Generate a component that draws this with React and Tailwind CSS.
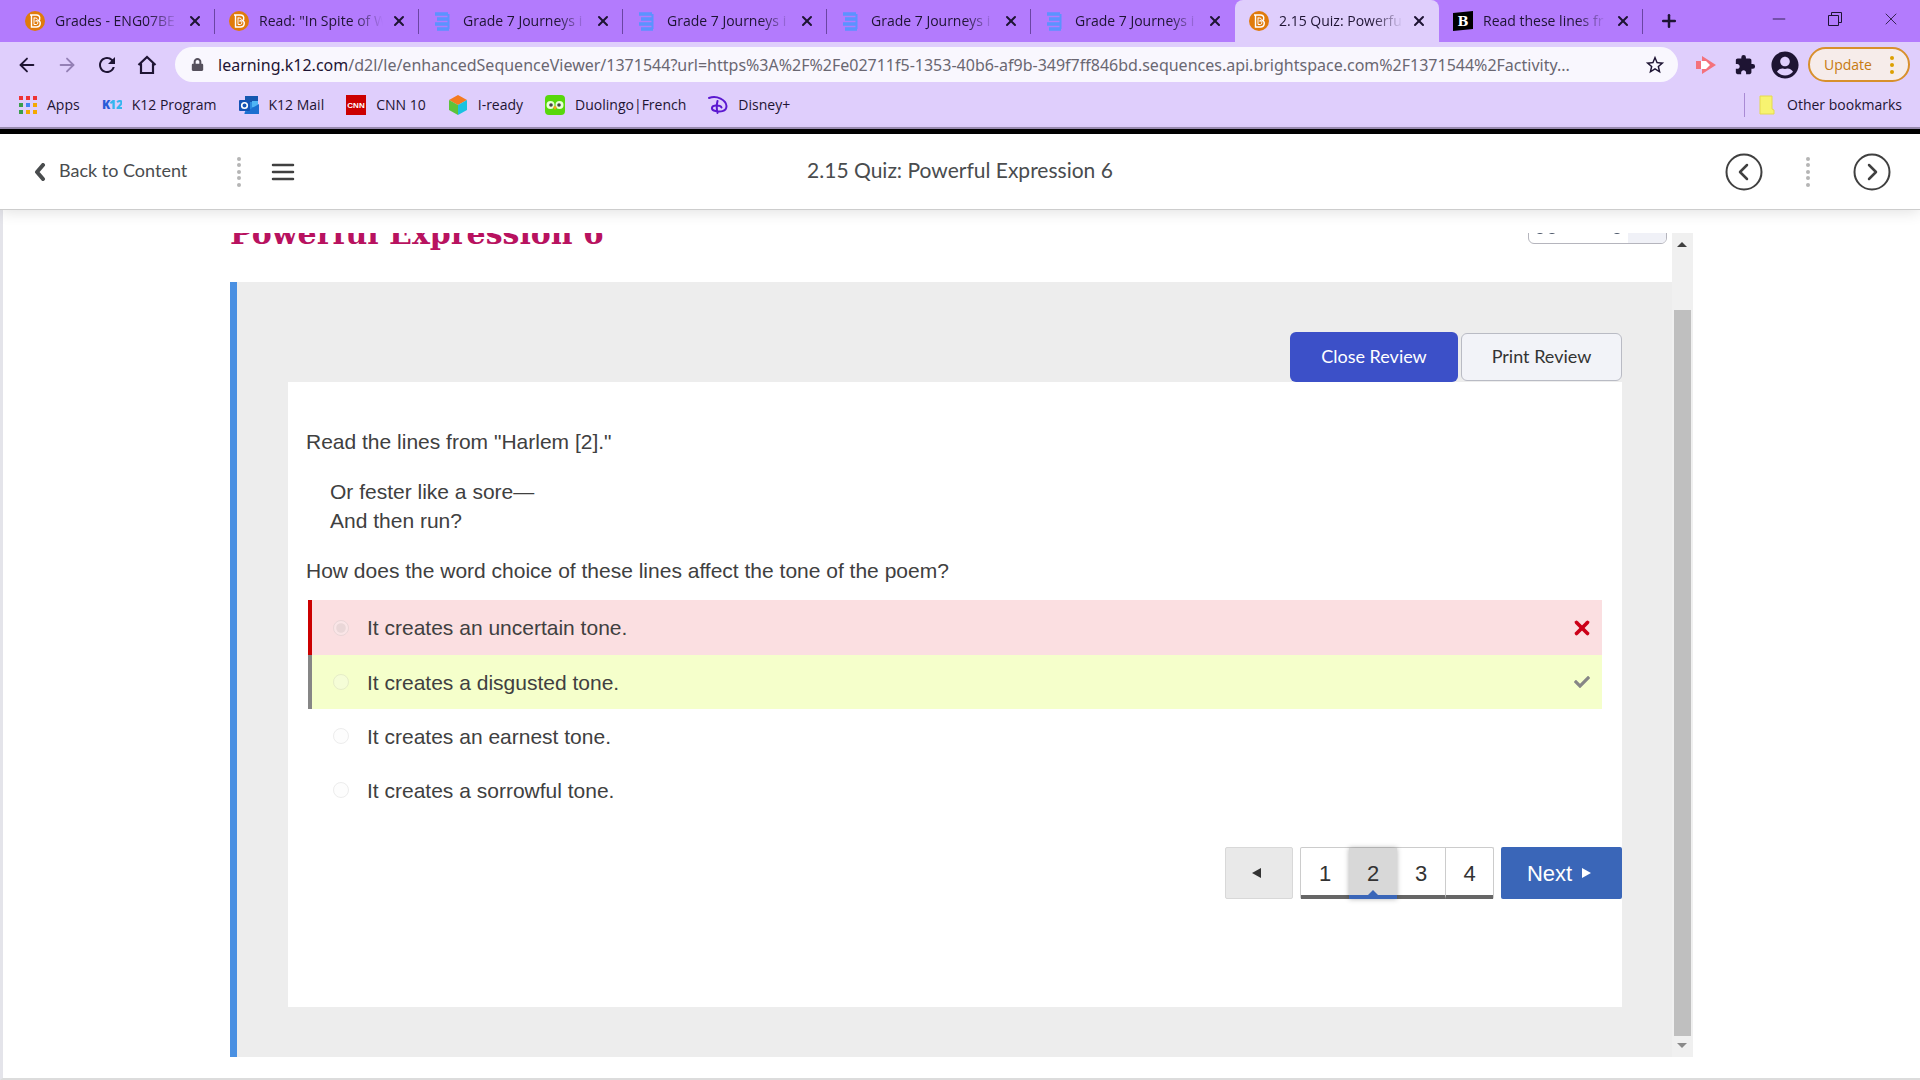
import { ArrowLeft, ArrowRight, Minus, Plus, X } from "lucide-react";
import { FaCheck, FaLock, FaUserCircle } from "react-icons/fa";
import { MdExtension, MdRefresh, MdStarBorder } from "react-icons/md";

const tabs = [
  { title: 'Grades - ENG07BE', icon: 'brightspace' },
  { title: 'Read: "In Spite of W', icon: 'brightspace' },
  { title: 'Grade 7 Journeys i', icon: 'docs' },
  { title: 'Grade 7 Journeys i', icon: 'docs' },
  { title: 'Grade 7 Journeys i', icon: 'docs' },
  { title: 'Grade 7 Journeys i', icon: 'docs' },
  { title: '2.15 Quiz: Powerfu', icon: 'brightspace', active: true },
  { title: 'Read these lines fr', icon: 'brainly' },
]

const bookmarks = [
  { name: 'Apps', icon: 'apps' },
  { name: 'K12 Program', icon: 'k12' },
  { name: 'K12 Mail', icon: 'outlook' },
  { name: 'CNN 10', icon: 'cnn' },
  { name: 'I-ready', icon: 'iready' },
  { name: 'Duolingo|French', icon: 'duolingo' },
  { name: 'Disney+', icon: 'disney' },
]

const answers = [
  { text: 'It creates an uncertain tone.', state: 'wrong' },
  { text: 'It creates a disgusted tone.', state: 'right' },
  { text: 'It creates an earnest tone.' },
  { text: 'It creates a sorrowful tone.' },
]

const rowStyles = {
  wrong: 'h-[55px] border-[#cc0000] bg-[#fbdfe1]',
  right: 'h-[54px] border-[#868686] bg-[#f5ffcb]',
  none: 'h-[54px] border-transparent',
}

const Icon = ({ name }) => {
  switch (name) {
    case 'brightspace':
      return (
        <svg viewBox="0 0 20 20" className="size-5 shrink-0" fill="none">
          <circle cx="10" cy="10" r="10" fill="#e07b0c" />
          <path d="M5 4h6.500c4 0 4 4.500 2 5.700 3 1.300 2 6.300-2 6.300H6.500V4" stroke="#fff" strokeWidth="1.400" />
          <path d="M9 6.500v7h2.500c1.800 0 1.800-3.500 0-3.500H10.500h.5c1.800 0 1.800-3 0-3H9" stroke="#fff" />
        </svg>
      )
    case 'docs':
      return (
        <svg viewBox="0 0 20 20" className="size-5 shrink-0" fill="none" stroke="#5b93ff" strokeWidth="3.500">
          <path d="M2 3h13M4 8h12M2 13h13M4 18h12" />
          <path d="M15.500 3v15" strokeWidth="2" />
        </svg>
      )
    case 'brainly':
      return (
        <svg viewBox="0 0 20 20" className="size-5 shrink-0">
          <path d="M0 2 20 0v18L0 20z" fill="#000" />
          <text x="10" y="15" textAnchor="middle" fontSize="13" fontWeight="bold" fill="#fff" fontFamily="DejaVu Serif">B</text>
        </svg>
      )
    case 'apps':
      return (
        <svg viewBox="0 0 18 18" className="size-[18px] shrink-0">
          {['#e33', '#e33', '#e33', '#3b9e4b', '#4285f4', '#f4a800', '#3b9e4b', '#f4a800', '#f4a800'].map((color, i) => (
            <rect key={i} x={(i % 3) * 7} y={Math.floor(i / 3) * 7} width="4" height="4" fill={color} />
          ))}
        </svg>
      )
    case 'k12':
      return (
        <svg viewBox="0 0 20 20" className="size-5 shrink-0" fontFamily="Open Sans" fontSize="12" fontWeight="800">
          <text x="0" y="14" fill="#2a5bd7">K</text>
          <text x="7" y="14" fill="#35b6ee">12</text>
        </svg>
      )
    case 'outlook':
      return (
        <svg viewBox="0 0 20 20" className="size-5 shrink-0">
          <path d="M6 1h13v17H6z" fill="#2b8ae0" />
          <path d="M6 1h13v6H6z" fill="#1557b0" />
          <path d="M13 6h6v6h-6z" fill="#50b5f5" />
          <path d="M5 18 20 9v10H6z" fill="#1c6fd0" />
          <rect y="5" width="11" height="11" rx="1" fill="#1353b5" />
          <circle cx="5.500" cy="10.500" r="2.800" fill="none" stroke="#fff" strokeWidth="1.600" />
        </svg>
      )
    case 'cnn':
      return (
        <svg viewBox="0 0 20 20" className="size-5 shrink-0">
          <rect width="20" height="20" fill="#c00" />
          <text x="10" y="13" textAnchor="middle" fontSize="8" fontWeight="bold" fill="#fff" fontFamily="Liberation Sans">CNN</text>
        </svg>
      )
    case 'iready':
      return (
        <svg viewBox="0 0 20 20" className="size-5 shrink-0">
          <path d="m10 0 9 5-9 5-9-5z" fill="#f47a20" />
          <path d="m1 5 9 5v10l-9-5z" fill="#5dc33a" />
          <path d="m19 5-9 5v10l9-5z" fill="#19c2e0" />
        </svg>
      )
    case 'duolingo':
      return (
        <svg viewBox="0 0 20 20" className="size-5 shrink-0">
          <rect width="20" height="20" rx="4" fill="#58d80a" />
          <circle cx="5.500" cy="10" r="4" fill="#e9ffd8" />
          <circle cx="14.500" cy="10" r="4" fill="#e9ffd8" />
          <circle cx="6" cy="10" r="1.800" fill="#444" />
          <circle cx="14" cy="10" r="1.800" fill="#444" />
          <path d="m8 12 2-1 2 1-2 3z" fill="#f9a01b" />
        </svg>
      )
    case 'disney':
      return (
        <svg viewBox="0 0 20 20" className="size-5 shrink-0" fill="none" stroke="#5b18d0" strokeWidth="2" strokeLinecap="round">
          <path d="M1 3C9 0 18 5 18.500 11c0 6-7 6-11 5-5-1-4.500-5 0-5.500 3-.3 5.500.5 6 2M9.500 6c-1 4-1 8 0 12" />
        </svg>
      )
    default:
      return null
  }
}

const Tab = ({ title, icon, active }) => (
  <div className={`flex h-full w-[204px] items-center pl-[14px] pr-3 ${active ? 'rounded-t-lg bg-[#dfcefc]' : ''}`}>
    <Icon name={icon} />
    <span className="ml-[10px] min-w-0 flex-1 overflow-hidden whitespace-nowrap [mask-image:linear-gradient(to_right,black_75%,transparent)]">
      {title}
    </span>
    <button aria-label="Close tab" className="ml-2"><X className="size-4" strokeWidth={3} /></button>
  </div>
)

const BrowserChrome = () => (
  <div className="bg-[#dfcefc] font-['Open_Sans',sans-serif] text-sm text-[#1e1433]">
    <div className="flex h-[42px] items-center bg-[#b37bfd] pl-[11px]">
      {tabs.map((tab, i) => (
        <div key={i} className="flex h-full items-center">
          <Tab {...tab} />
          {!tab.active && !tabs[i + 1]?.active && <div className="-ml-px h-[25px] w-px bg-[#6b45a3]" />}
        </div>
      ))}
      <button aria-label="New tab" className="ml-4"><Plus className="size-5" strokeWidth={3} /></button>
      <div className="ml-auto flex items-center gap-[38px] pr-[19px] pb-1">
        <button aria-label="Minimize"><Minus className="size-5" strokeWidth={1} /></button>
        <button aria-label="Restore">
          <svg viewBox="0 0 16 16" className="size-4" fill="none" stroke="currentColor">
            <path d="M1.500 4.500h10v10h-10zM4.500 4V1.500h10v10H12" />
          </svg>
        </button>
        <button aria-label="Close"><X className="size-5" strokeWidth={1} /></button>
      </div>
    </div>

    <div className="flex h-[45px] items-center pl-4 pr-[10px]">
      <button aria-label="Back"><ArrowLeft className="size-[22px]" strokeWidth={2} /></button>
      <button aria-label="Forward" className="ml-[18px] text-[#9480b5]"><ArrowRight className="size-[22px]" /></button>
      <button aria-label="Reload" className="ml-[17px]"><MdRefresh className="size-6" /></button>
      <button aria-label="Home" className="ml-4">
        <svg viewBox="0 0 24 24" className="size-6" fill="none" stroke="currentColor" strokeWidth="2.200">
          <path d="M3.500 12 12 4l8.500 8M6 10.500V20h12v-9.500" />
        </svg>
      </button>
      <div className="ml-4 flex h-[35px] min-w-0 flex-1 items-center rounded-full bg-[#f9f7fe] pl-4 pr-3">
        <FaLock className="size-[13px] shrink-0 text-[#55505c]" />
        <span className="ml-[14px] flex-1 truncate font-['Noto_Sans',sans-serif] text-base text-[#6a6772]">
          <span className="text-[#1e1433]">learning.k12.com</span>/d2l/le/enhancedSequenceViewer/1371544?url=https%3A%2F%2Fe02711f5-1353-40b6-af9b-349f7ff846bd.sequences.api.brightspace.com%2F1371544%2Factivity...
        </span>
        <button aria-label="Bookmark this tab"><MdStarBorder className="size-[22px]" /></button>
      </div>
      <svg viewBox="0 0 20 20" className="ml-[18px] size-5 shrink-0" fill="#f4727c">
        <path d="M0 6h5v8H0zM6 1l14 9-14 9z" />
        <path d="M5 6h5l4 4-4 4H5z" fill="#fff" />
      </svg>
      <MdExtension className="ml-[18px] size-[22px] shrink-0" />
      <FaUserCircle className="ml-[15px] size-7 shrink-0" />
      <button className="ml-[9px] flex h-[35px] w-[102px] items-center justify-between rounded-full border-2 border-[#d8902c] bg-[#f6ecea] px-[14px] text-[#c67a10]">
        Update
        <svg viewBox="0 0 4 18" className="h-[18px] w-1" fill="#dca000">
          <circle cx="2" cy="2" r="2" /><circle cx="2" cy="9" r="2" /><circle cx="2" cy="16" r="2" />
        </svg>
      </button>
    </div>

    <div className="flex h-10 items-center pl-[19px] pr-[18px] pb-1">
      <div className="flex gap-[22px]">
        {bookmarks.map(({ name, icon }) => (
          <a key={name} href="#" className="flex items-center gap-[10px] whitespace-nowrap"><Icon name={icon} />{name}</a>
        ))}
      </div>
      <a href="#" className="ml-auto flex h-6 items-center gap-3 border-l border-[#a98ad4] pl-[14px]">
        <svg viewBox="0 0 16 20" className="h-5 w-4"><path d="M1 1h12v13l2 1v4H1z" fill="#f7f370" stroke="#e5da4e" /></svg>
        Other bookmarks
      </a>
    </div>
    <div className="h-[7px] border-t-2 border-[#9a8cb0] bg-black" />
  </div>
)

const Dots = () => (
  <svg viewBox="0 0 4 30" className="h-[30px] w-1" fill="#b5b5b5">
    {[2, 8, 15, 21, 28].map(y => <circle key={y} cx="2" cy={y} r="2" />)}
  </svg>
)

const Chevron = ({ d }) => (
  <svg viewBox="0 0 38 38" className="size-[38px]" fill="none" stroke="#404040" strokeWidth="2">
    <circle cx="19" cy="19" r="17.500" />
    <path d={d} strokeWidth="2.500" strokeLinecap="round" strokeLinejoin="round" />
  </svg>
)

const CourseHeader = () => (
  <header className="relative z-10 grid h-[76px] grid-cols-3 items-center border-b border-[#cdcdcd] bg-white px-[29px] font-['Lato',sans-serif] text-[#494c4e] shadow-[0_2px_14px_rgba(0,0,0,0.12)]">
    <div className="flex items-center pl-[5px]">
      <a href="#" className="flex items-center gap-[13px] text-lg">
        <svg viewBox="0 0 12 18" className="h-[18px] w-3" fill="none" stroke="#494c4e" strokeWidth="4" strokeLinecap="round" strokeLinejoin="round"><path d="M9 2 3 9l6 7" /></svg>
        <span className="pb-[3px]">Back to Content</span>
      </a>
      <div className="ml-[50px]"><Dots /></div>
      <button aria-label="Open table of contents" className="ml-[30px]">
        <svg viewBox="0 0 24 20" className="h-5 w-6" fill="none" stroke="#404040" strokeWidth="2.500" strokeLinecap="round"><path d="M2 3h20M2 10h20M2 17h20" /></svg>
      </button>
    </div>
    <h1 className="pb-[3px] text-center text-[21px]">2.15 Quiz: Powerful Expression 6</h1>
    <div className="flex items-center justify-end gap-[43px]">
      <button aria-label="Previous"><Chevron d="m22 12-7 7 7 7" /></button>
      <Dots />
      <button aria-label="Next"><Chevron d="m16 12 7 7-7 7" /></button>
    </div>
  </header>
)

const Answer = ({ text, state = 'none' }) => (
  <label className={`flex items-center border-l-4 pl-[21px] pr-[9px] ${rowStyles[state]}`}>
    <input type="radio" name="answer" disabled defaultChecked={state === 'wrong'} className="size-4 opacity-40" />
    <span className="ml-[18px] flex-1">{text}</span>
    {state === 'wrong' && <X className="size-[22px] text-[#cc0018]" strokeWidth={4} />}
    {state === 'right' && <FaCheck className="mr-[3px] size-4 text-[#868686]" />}
  </label>
)

const Pagination = () => (
  <nav className="flex h-[52px] justify-end text-[22px] text-[#333]">
    <button aria-label="Previous question" className="flex w-[68px] items-center justify-center rounded-xs border border-[#d8d8d8] bg-[#e9e9e9] pr-1">
      <svg viewBox="0 0 10 10" className="size-[10px]"><path d="M0 5 9 0v10z" fill="#333" /></svg>
    </button>
    <div className="mx-[7px] flex rounded-xs border-x border-t border-[#ccc]">
      {[1, 2, 3, 4].map(page => (
        <button
          key={page}
          className={`relative w-12 border-b-4 pt-1 ${page === 2 ? 'z-10 border-[#3a66b8] bg-[#d8d8d8] shadow-[0_0_5px_rgba(0,0,0,0.3)]' : 'border-[#666]'} ${page === 4 ? 'border-l border-l-[#ccc]' : ''}`}
        >
          {page}
          {page === 2 && (
            <svg viewBox="0 0 10 5" className="absolute bottom-0 left-1/2 h-[5px] w-[10px] -translate-x-1/2"><path d="m0 5 5-5 5 5z" fill="#3a66b8" /></svg>
          )}
        </button>
      ))}
    </div>
    <button className="flex w-[121px] items-center justify-center gap-[10px] rounded-xs bg-[#3a66b8] pr-1 text-white">
      Next
      <svg viewBox="0 0 10 10" className="size-[10px]"><path d="M0 0v10l9-5z" fill="#fff" /></svg>
    </button>
  </nav>
)

const Quiz = () => (
  <section className="flex flex-1 flex-col border-l-[7px] border-[#4a90e2] bg-[#ededed] py-[50px] pr-[50px] pl-[51px]">
    <div className="flex items-center justify-end gap-[3px] font-['Lato',sans-serif] text-lg">
      <button className="h-[50px] w-[168px] rounded-md bg-[#3c50c8] pb-[2px] text-white">Close Review</button>
      <button className="h-12 w-[161px] rounded-md border border-[#b9bbc4] bg-[#f2f3f8] pb-[2px] text-[#333]">Print Review</button>
    </div>
    <div className="flex-1 bg-white pt-[45px] text-[21px] leading-[29px] text-[#404040]">
      <div className="px-[18px]">
        <p>Read the lines from "Harlem [2]."</p>
        <p className="my-[21px] pl-6">Or fester like a sore—<br />And then run?</p>
        <p>How does the word choice of these lines affect the tone of the poem?</p>
      </div>
      <div className="mt-[15px] mr-5 ml-5">
        {answers.map(answer => <Answer key={answer.text} {...answer} />)}
      </div>
      <div className="mt-[30px]"><Pagination /></div>
    </div>
  </section>
)

const Scrollbar = () => (
  <div className="flex w-[21px] flex-col items-center bg-[#f0f0f0] pr-px">
    <svg viewBox="0 0 10 5" className="mt-[9px] h-[5px] w-[10px]"><path d="m0 5 5-5 5 5z" fill="#404040" /></svg>
    <div className="mt-[63px] w-[17px] flex-1 bg-[#bfbfbf]" />
    <svg viewBox="0 0 10 5" className="mt-[7px] mb-[9px] h-[5px] w-[10px]"><path d="m0 0 5 5 5-5z" fill="#8a8a8a" /></svg>
  </div>
)

export default function App() {
  return (
    <div className="flex min-h-screen flex-col overflow-hidden bg-white">
      <BrowserChrome />
      <CourseHeader />
      <main className="flex flex-1 flex-col border-b-2 border-l-[3px] border-b-[#dcdcdc] border-l-[#e4e4ea] pt-[23px] pr-[227px] pb-[21px] pl-[227px] font-['Liberation_Sans',Arial,sans-serif]">
        <div className="flex flex-1">
          <div className="flex min-w-0 flex-1 flex-col">
            <div className="flex h-[49px] items-start justify-between overflow-hidden pr-[5px]">
              <h2 className="-mt-6 font-['DejaVu_Serif',serif] text-[30px] leading-[50px] font-bold text-[#b8125f]">Powerful Expression 6</h2>
              <div className="-mt-6 flex h-[35px] w-[139px] overflow-hidden rounded-md border border-[#b5b5bd]">
                <svg viewBox="0 0 99 33" className="h-[33px] w-[99px]" fill="none" stroke="#4a5568" strokeWidth="2">
                  <path d="M7 21q4 4 8 0M19 21q4 4 8 0M84 21q4 4 8 0" />
                </svg>
                <div className="flex-1 bg-[#f0f1f7]" />
              </div>
            </div>
            <Quiz />
          </div>
          <Scrollbar />
        </div>
      </main>
    </div>
  )
}
